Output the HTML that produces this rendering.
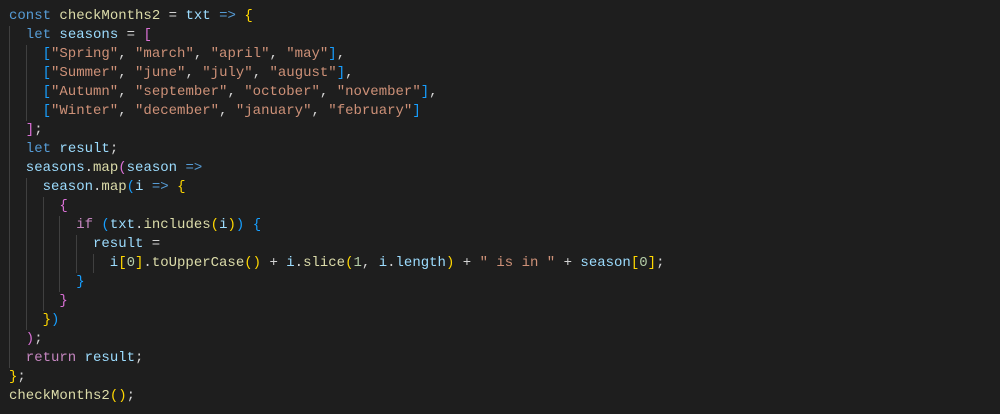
<!DOCTYPE html>
<html><head><meta charset="utf-8"><style>
body{margin:0;background:#1e1e1e;width:1000px;height:414px;overflow:hidden}
.c{position:absolute;left:9px;top:7px;font-family:"Liberation Mono",monospace;font-size:14px;color:#d4d4d4}
.l{height:19px;line-height:19px;white-space:pre}
.g{display:inline-block;width:16.8px;height:19px;vertical-align:top;box-shadow:inset 1px 0 #404040}
.k{color:#569cd6}.v{color:#9cdcfe}.f{color:#dcdcaa}.s{color:#ce9178}.n{color:#b5cea8}.p{color:#c586c0}
.y{color:#ffd700}.m{color:#da70d6}.b{color:#179fff}
</style></head><body><div class="c">
<div class="l"><span class="k">const</span> <span class="f">checkMonths2</span> = <span class="v">txt</span> <span class="k">=&gt;</span> <span class="y">{</span></div>
<div class="l"><span class="g"></span><span class="k">let</span> <span class="v">seasons</span> = <span class="m">[</span></div>
<div class="l"><span class="g"></span><span class="g"></span><span class="b">[</span><span class="s">"Spring"</span>, <span class="s">"march"</span>, <span class="s">"april"</span>, <span class="s">"may"</span><span class="b">]</span>,</div>
<div class="l"><span class="g"></span><span class="g"></span><span class="b">[</span><span class="s">"Summer"</span>, <span class="s">"june"</span>, <span class="s">"july"</span>, <span class="s">"august"</span><span class="b">]</span>,</div>
<div class="l"><span class="g"></span><span class="g"></span><span class="b">[</span><span class="s">"Autumn"</span>, <span class="s">"september"</span>, <span class="s">"october"</span>, <span class="s">"november"</span><span class="b">]</span>,</div>
<div class="l"><span class="g"></span><span class="g"></span><span class="b">[</span><span class="s">"Winter"</span>, <span class="s">"december"</span>, <span class="s">"january"</span>, <span class="s">"february"</span><span class="b">]</span></div>
<div class="l"><span class="g"></span><span class="m">]</span>;</div>
<div class="l"><span class="g"></span><span class="k">let</span> <span class="v">result</span>;</div>
<div class="l"><span class="g"></span><span class="v">seasons</span>.<span class="f">map</span><span class="m">(</span><span class="v">season</span> <span class="k">=&gt;</span></div>
<div class="l"><span class="g"></span><span class="g"></span><span class="v">season</span>.<span class="f">map</span><span class="b">(</span><span class="v">i</span> <span class="k">=&gt;</span> <span class="y">{</span></div>
<div class="l"><span class="g"></span><span class="g"></span><span class="g"></span><span class="m">{</span></div>
<div class="l"><span class="g"></span><span class="g"></span><span class="g"></span><span class="g"></span><span class="p">if</span> <span class="b">(</span><span class="v">txt</span>.<span class="f">includes</span><span class="y">(</span><span class="v">i</span><span class="y">)</span><span class="b">)</span> <span class="b">{</span></div>
<div class="l"><span class="g"></span><span class="g"></span><span class="g"></span><span class="g"></span><span class="g"></span><span class="v">result</span> =</div>
<div class="l"><span class="g"></span><span class="g"></span><span class="g"></span><span class="g"></span><span class="g"></span><span class="g"></span><span class="v">i</span><span class="y">[</span><span class="n">0</span><span class="y">]</span>.<span class="f">toUpperCase</span><span class="y">()</span> + <span class="v">i</span>.<span class="f">slice</span><span class="y">(</span><span class="n">1</span>, <span class="v">i</span>.<span class="v">length</span><span class="y">)</span> + <span class="s">" is in "</span> + <span class="v">season</span><span class="y">[</span><span class="n">0</span><span class="y">]</span>;</div>
<div class="l"><span class="g"></span><span class="g"></span><span class="g"></span><span class="g"></span><span class="b">}</span></div>
<div class="l"><span class="g"></span><span class="g"></span><span class="g"></span><span class="m">}</span></div>
<div class="l"><span class="g"></span><span class="g"></span><span class="y">}</span><span class="b">)</span></div>
<div class="l"><span class="g"></span><span class="m">)</span>;</div>
<div class="l"><span class="g"></span><span class="p">return</span> <span class="v">result</span>;</div>
<div class="l"><span class="y">}</span>;</div>
<div class="l"><span class="f">checkMonths2</span><span class="y">()</span>;</div>
</div></body></html>
